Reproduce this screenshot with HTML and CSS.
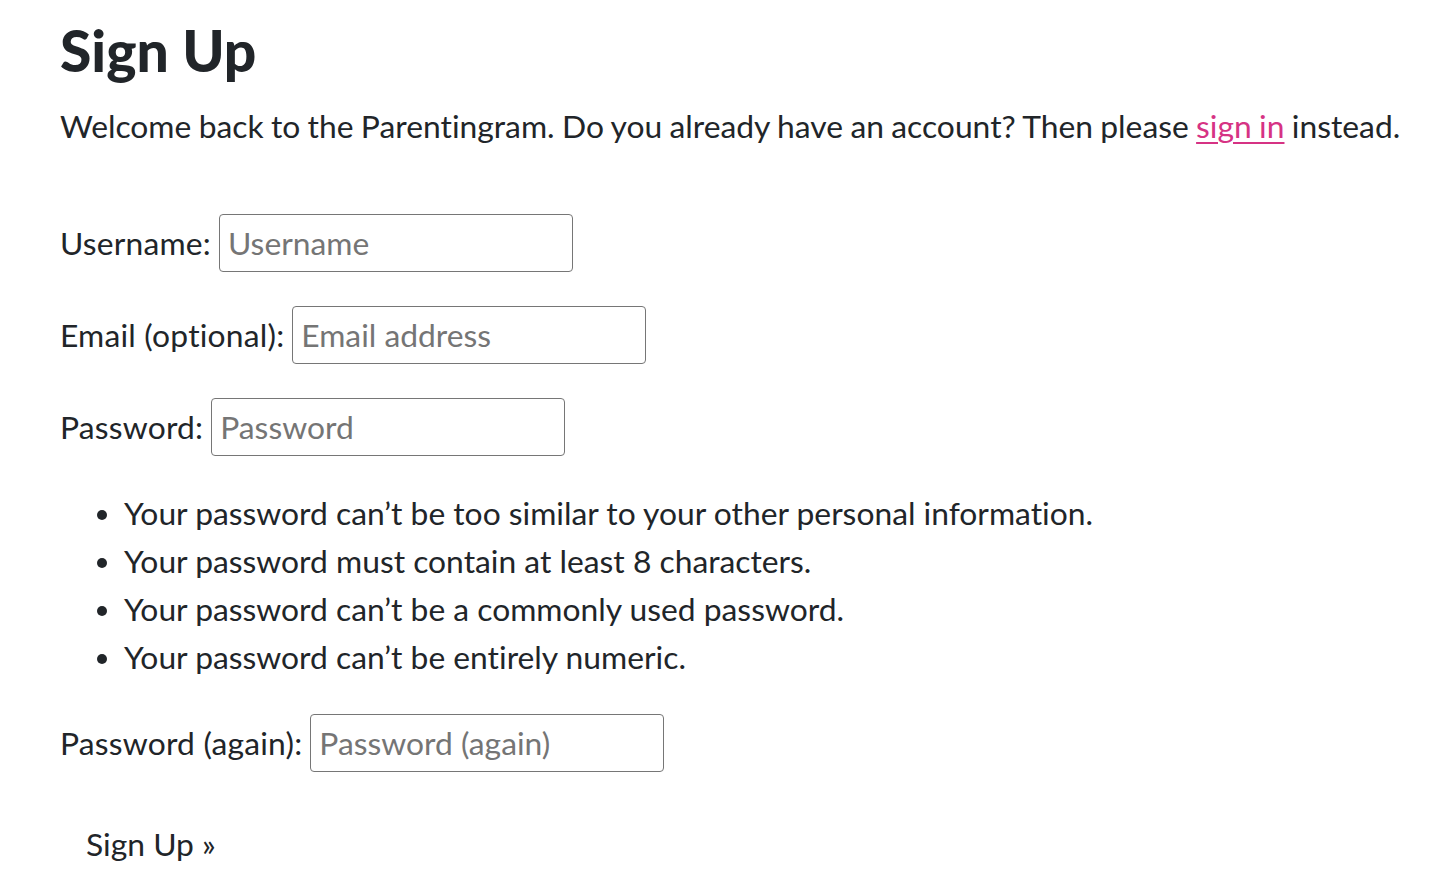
FILE: index.html
```html
<!DOCTYPE html>
<html lang="en">
<head>
<meta charset="utf-8">
<title>Sign Up</title>
<link rel="stylesheet" href="styles.css">
</head>
<body>
<main class="page">
  <h1 class="title">Sign Up</h1>
  <p class="intro">Welcome back to the Parentingram. Do you already have an account? Then please <a class="link" href="#">sign in</a> instead.</p>
  <form class="form">
    <div class="row">
      <label class="label" for="u">Username:</label>
      <input class="field" id="u" type="text" placeholder="Username">
    </div>
    <div class="row">
      <label class="label" for="e">Email (optional):</label>
      <input class="field" id="e" type="email" placeholder="Email address">
    </div>
    <div class="row">
      <label class="label" for="p">Password:</label>
      <input class="field" id="p" type="password" placeholder="Password">
    </div>
    <ul class="rules">
      <li>Your password can’t be too similar to your other personal information.</li>
      <li>Your password must contain at least 8 characters.</li>
      <li>Your password can’t be a commonly used password.</li>
      <li>Your password can’t be entirely numeric.</li>
    </ul>
    <div class="row">
      <label class="label" for="p2">Password (again):</label>
      <input class="field" id="p2" type="password" placeholder="Password (again)">
    </div>
    <button class="submit" type="button">Sign Up »</button>
  </form>
</main>
</body>
</html>
```
FILE: styles.css
```css
html, body {
  margin: 0;
  padding: 0;
  background: #fff;
}
body {
  font-family: Lato, "Open Sans", sans-serif;
  font-size: 31.8px;
  line-height: 48px;
  color: #212529;
  font-variant-ligatures: none;
}
.page {
  padding: 14px 10px 0 60px;
}
.title {
  font-family: Lato, sans-serif;
  font-weight: 900;
  font-size: 57px;
  line-height: 72px;
  margin: 0 0 16px 0;
}
.intro {
  margin: 0 0 48px 0;
  white-space: nowrap;
  word-spacing: -0.8px;
}
.link {
  color: #d63384;
  text-decoration: underline;
  text-underline-offset: 4px;
  text-decoration-thickness: 2px;
}
.form {
  display: flex;
  flex-direction: column;
}
.row {
  display: flex;
  align-items: center;
  gap: 8px;
  margin: 16px 0 18px 0;
}
.label {
  white-space: nowrap;
  letter-spacing: 0.2px;
}
.field {
  box-sizing: border-box;
  width: 354px;
  height: 58px;
  padding: 0 8px;
  border: 1.5px solid #767676;
  border-radius: 4px;
  font-family: Lato, sans-serif;
  font-size: 31.8px;
  color: #212529;
  background: #fff;
  font-variant-ligatures: none;
}
.field::placeholder {
  color: #757575;
}
.rules {
  margin: 15px 0 17px 0;
  padding-left: 64px;
}
.submit {
  align-self: flex-start;
  margin-top: 30px;
  padding: 0 26px;
  border: none;
  background: transparent;
  font-family: Lato, sans-serif;
  font-size: 31.8px;
  line-height: 48px;
  color: #212529;
  font-variant-ligatures: none;
}
```
